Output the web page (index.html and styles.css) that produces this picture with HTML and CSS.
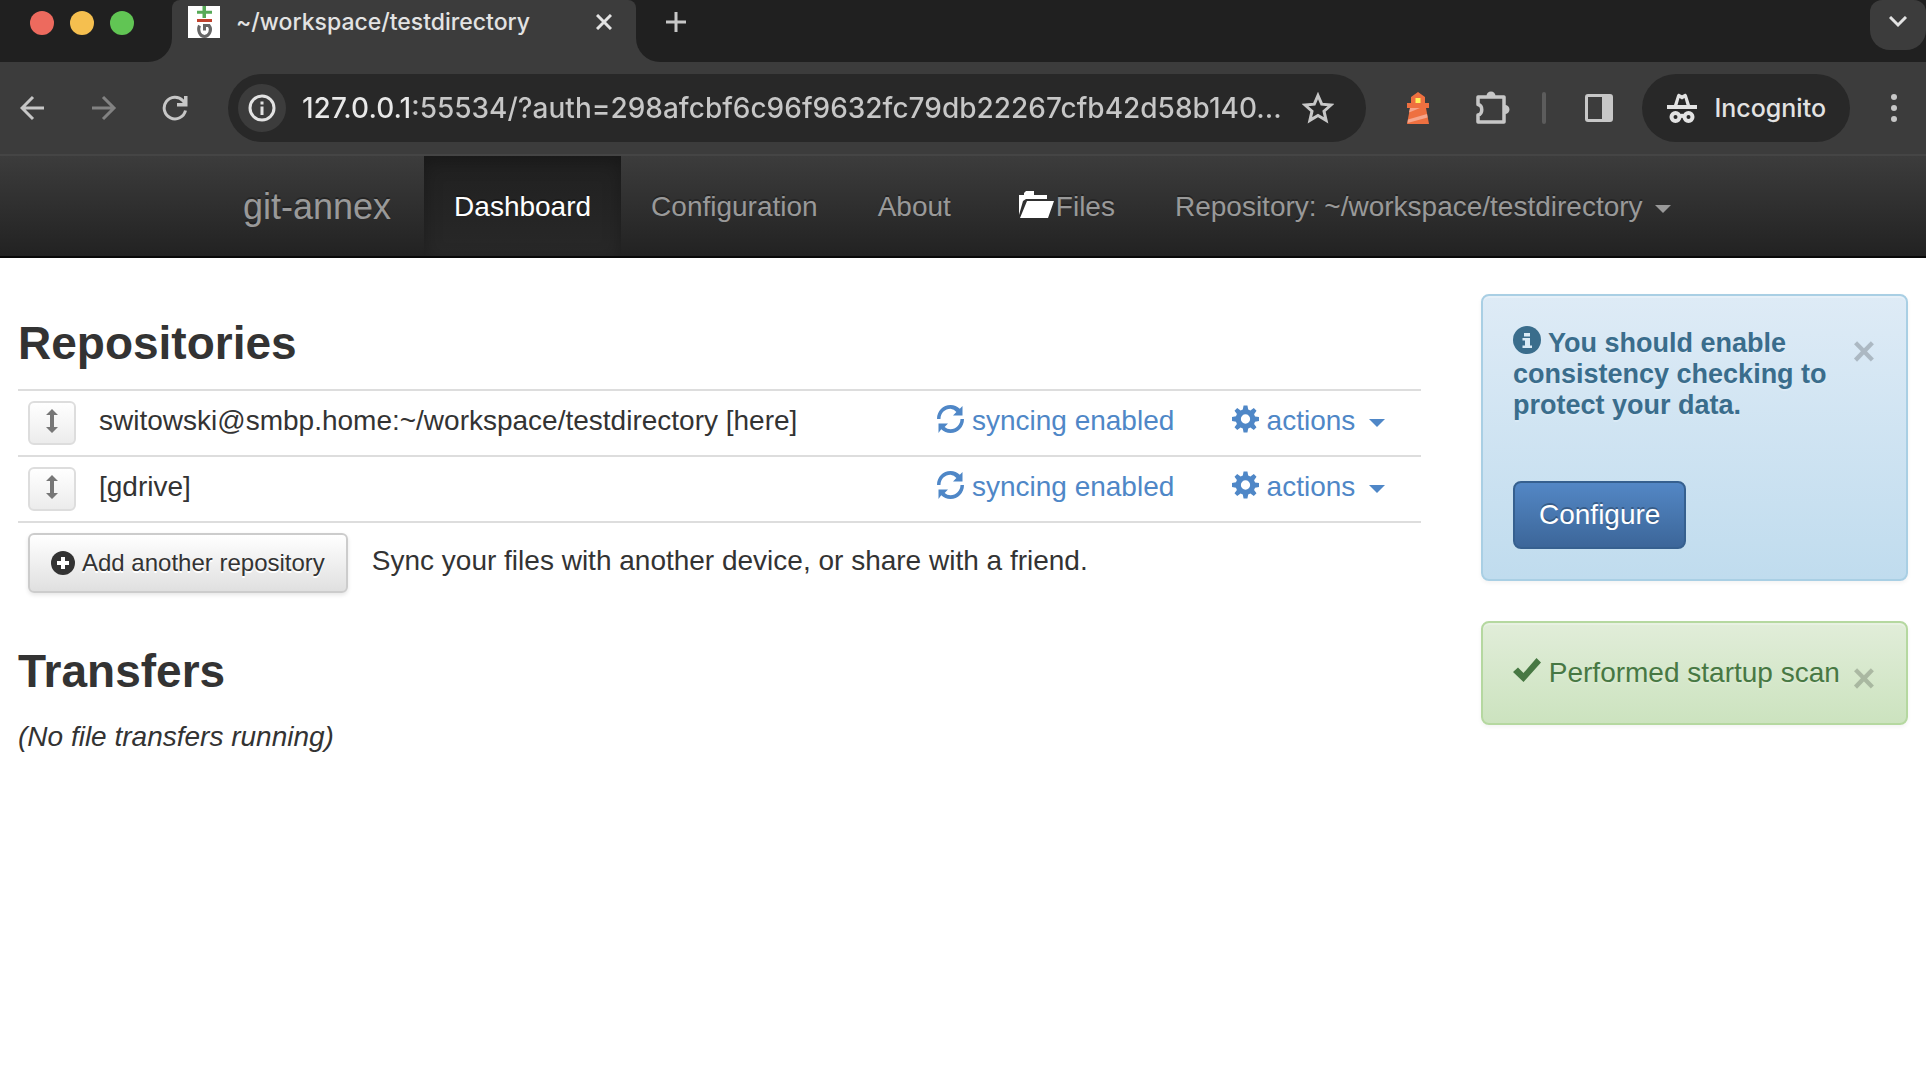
FILE: index.html
```html
<!DOCTYPE html>
<html lang="en">
<head>
<meta charset="utf-8">
<title>~/workspace/testdirectory</title>
<link rel="stylesheet" href="styles.css">
</head>
<body>
<svg class="sprite" aria-hidden="true">
  <symbol id="updown" viewBox="0 0 12 24"><path d="M6 0l6 6H8v12h4l-6 6-6-6h4V6H0z"/></symbol>
  <symbol id="refresh" viewBox="0 0 27 28"><path d="M0 14C0 6 6 0 13.500 0c3.700 0 6.900 1.400 9.300 3.700L25.500 1v9.500H16l3.400-3.400A9.800 9.800 0 0 0 13.500 3.800C8 3.800 3.600 8 3.500 14zM27 14c0 8-6 14-13.500 14-3.700 0-6.900-1.400-9.300-3.700L1.500 28v-9.500H11l-3.400 3.400a9.800 9.800 0 0 0 5.900 2.300c5.500 0 9.900-4.200 10-10.200z"/></symbol>
  <symbol id="gear" viewBox="0 0 28 28"><path fill-rule="evenodd" d="M12 0h4l.8 4.200 2.300 1 3.500-2.500 2.800 2.800-2.500 3.500 1 2.300L28 12v4l-4.100.8-1 2.300 2.500 3.500-2.800 2.800-3.500-2.500-2.300 1L16 28h-4l-.8-4.100-2.300-1-3.500 2.500-2.800-2.800 2.500-3.500-1-2.300L0 16v-4l4.100-.8 1-2.300-2.500-3.500 2.800-2.800 3.500 2.500 2.300-1zM14 9.200a4.800 4.800 0 1 0 0 9.600 4.800 4.800 0 0 0 0-9.600z"/></symbol>
</svg>

<header class="browser">
  <div class="tabstrip">
    <div class="window-controls"><i class="light red"></i><i class="light yellow"></i><i class="light green"></i></div>
    <div class="tab-slot">
      <div class="tab">
        <svg class="favicon" viewBox="0 0 32 32"><path fill="#fff" d="M0 0h32v32H0z"/><path fill="#57a957" d="M14.500 0h3.500v12h-3.500zM9 4.800h15v3H9z"/><path fill="#c0432f" d="M9 13h15v3H9z"/><path fill="none" stroke="#666" stroke-width="3" d="M11.500 19.500c-2.300 5 .5 11 5 11s8-6.500 4.500-11h-4.500v5"/></svg>
        <span class="tab-title">~/workspace/testdirectory</span>
        <button class="chrome-btn" aria-label="Close tab"><svg width="16" height="16" viewBox="0 0 16 16"><path class="line light-line" d="M1 1l14 14M15 1L1 15"/></svg></button>
      </div>
    </div>
    <div class="strip-rest">
      <button class="chrome-btn" aria-label="New tab"><svg width="20" height="20" viewBox="0 0 20 20"><path class="line" d="M10 0v20M0 10h20"/></svg></button>
      <button class="chrome-btn tab-search" aria-label="Search tabs"><svg width="18" height="12" viewBox="0 0 18 12"><path class="line light-line" d="M1 1l8 8 8-8"/></svg></button>
    </div>
  </div>
  <div class="toolbar">
    <div class="history">
      <button class="chrome-btn" aria-label="Back"><svg width="26" height="26" viewBox="0 0 26 26"><path class="line" d="M24 13H2M13 2L2 13l11 11"/></svg></button>
      <button class="chrome-btn faded" aria-label="Forward"><svg width="26" height="26" viewBox="0 0 26 26"><path class="line" d="M1 13h22M12 2l11 11-11 11"/></svg></button>
      <button class="chrome-btn" aria-label="Reload"><svg width="26" height="26" viewBox="0 0 26 26"><path class="line" d="M23.500 15.500A10.800 10.800 0 1 1 21 5.800L23.500 9"/><path fill="#c7c7c7" d="M22 1h3.500v10.500H15V8h7z"/></svg></button>
    </div>
    <div class="omnibox">
      <button class="chrome-btn site-info" aria-label="Site information"><svg width="28" height="28" viewBox="0 0 28 28"><circle class="line light-line" cx="14" cy="14" r="12"/><path fill="#e3e3e3" d="M12.500 12.500h3V21h-3zM12.500 7.500h3v3h-3z"/></svg></button>
      <input class="url" type="text" aria-label="Address" value="127.0.0.1:55534/?auth=298afcbf6c96f9632fc79db22267cfb42d58b140...">
      <button class="chrome-btn" aria-label="Bookmark this page"><svg width="32" height="32" viewBox="0 0 32 32"><path class="line" d="M16 3.500l3.700 8.700 9.300.8-7 6.200 2.100 9.200-8.100-4.900-8.100 4.900L10 19.200 3 13l9.300-.8z"/></svg></button>
    </div>
    <div class="extensions">
      <button class="chrome-btn" aria-label="Lighthouse"><svg width="24" height="32" viewBox="0 0 24 32"><path fill="#ee7040" d="M12 0l7 5v6h4v5h-3l3 16H1l3-16H1v-5h4V5z"/><path fill="#fff25a" d="M9.500 6h5v5h-5z"/><path fill="#f6a58b" d="M4 16h10L3 20.500zM2 27.500L21 22l.6 3.500L1.500 31z"/></svg></button>
      <button class="chrome-btn" aria-label="Extensions"><svg width="36" height="36" viewBox="0 0 36 36"><path fill="none" stroke="#c7c7c7" stroke-width="3.500" stroke-linejoin="round" d="M4 7h26v25H4v-7c5-1 5-9.500 0-10.500z"/><path fill="#c7c7c7" d="M12.500 6a4.500 4.500 0 0 1 9 0zM31 15a4.500 4.500 0 0 1 0 9z"/></svg></button>
      <i class="separator"></i>
      <button class="chrome-btn" aria-label="Side panel"><svg width="30" height="30" viewBox="0 0 30 30"><path fill="#c7c7c7" fill-rule="evenodd" d="M4 1h22a3 3 0 0 1 3 3v22a3 3 0 0 1-3 3H4a3 3 0 0 1-3-3V4a3 3 0 0 1 3-3zm0 3v22h14V4z"/></svg></button>
    </div>
    <button class="incognito"><svg width="32" height="32" viewBox="0 0 32 32"><path fill="#e3e3e3" fill-rule="evenodd" d="M1 13h7L11 3.500C11.500 2 12.500 1.500 13.500 2l2.500 1.200L18.500 2c1-.5 2 0 2.500 1.500L24 13h7v4H1zm10.500 0h9L18.500 6 16 7.500 13.500 6z"/><g fill="none" stroke="#e3e3e3" stroke-width="4"><circle cx="9.500" cy="25" r="4"/><circle cx="22.500" cy="25" r="4"/><path d="M13 24.500q3-1.500 6 0"/></g></svg>Incognito</button>
    <button class="chrome-btn" aria-label="Menu"><svg width="8" height="28" viewBox="0 0 8 28" fill="#c7c7c7"><circle cx="4" cy="3" r="3"/><circle cx="4" cy="14" r="3"/><circle cx="4" cy="25" r="3"/></svg></button>
  </div>
</header>

<nav class="navbar">
  <a class="brand" href="#">git-annex</a>
  <a class="nav-link active" href="#">Dashboard</a>
  <a class="nav-link" href="#">Configuration</a>
  <a class="nav-link" href="#">About</a>
  <a class="nav-link" href="#"><svg class="folder" width="36" height="28" viewBox="0 0 36 28"><path fill="#fff" d="M0 24V4h5V2l2-2h8v4h13v4H7L4 10zM8 10h27l-6 17H1z"/></svg>Files</a>
  <a class="nav-link" href="#">Repository: ~/workspace/testdirectory <i class="caret"></i></a>
</nav>

<div class="content">
  <main>
    <h2>Repositories</h2>
    <table class="repos">
      <tbody>
        <tr>
          <td class="name"><button class="drag" aria-label="Reorder"><svg width="12" height="24"><use href="#updown"/></svg></button>switowski@smbp.home:~/workspace/testdirectory [here]</td>
          <td class="sync"><a href="#"><svg width="27" height="28"><use href="#refresh"/></svg>syncing enabled</a></td>
          <td class="actions"><a href="#"><svg width="27" height="28"><use href="#gear"/></svg>actions <i class="caret"></i></a></td>
        </tr>
        <tr>
          <td class="name"><button class="drag" aria-label="Reorder"><svg width="12" height="24"><use href="#updown"/></svg></button>[gdrive]</td>
          <td class="sync"><a href="#"><svg width="27" height="28"><use href="#refresh"/></svg>syncing enabled</a></td>
          <td class="actions"><a href="#"><svg width="27" height="28"><use href="#gear"/></svg>actions <i class="caret"></i></a></td>
        </tr>
        <tr>
          <td class="add" colspan="3"><div class="add-row"><button class="add-btn"><svg width="24" height="24" viewBox="0 0 24 24"><circle cx="12" cy="12" r="12" fill="#333"/><path fill="#fff" d="M10 6h4v4h4v4h-4v4h-4v-4H6v-4h4z"/></svg>Add another repository</button><span>Sync your files with another device, or share with a friend.</span></div></td>
        </tr>
      </tbody>
    </table>
    <h2>Transfers</h2>
    <p class="empty">(No file transfers running)</p>
  </main>
  <aside>
    <div class="alert info">
      <button class="close" aria-label="Dismiss">×</button>
      <h4><svg width="28" height="28" viewBox="0 0 28 28"><circle cx="14" cy="14" r="14" fill="#3a6d8c"/><path fill="#d9eaf5" d="M11 7h6v3.500h-6zM9.500 12H17v7.500h2V22H9.500v-2.500H12v-5H9.500z"/></svg> You should enable consistency checking to protect your data.</h4>
      <button class="primary">Configure</button>
    </div>
    <div class="alert success">
      <button class="close" aria-label="Dismiss">×</button>
      <p><svg width="28" height="24" viewBox="0 0 28 24"><path fill="#477843" d="M0 14l5-4.500 5.500 5.500L23.500 0 28 4.500 10.500 24z"/></svg> Performed startup scan</p>
    </div>
  </aside>
</div>
</body>
</html>
```

FILE: styles.css
```css
* { box-sizing: border-box; }
body {
  margin: 0;
  background: #fff;
  color: #333;
  font: 28px/40px "Liberation Sans", Arial, sans-serif;
}
button { font: inherit; cursor: pointer; }
a { text-decoration: none; }
svg { flex: none; }
.sprite { display: none; }

/* Browser window */
.browser { background: #3c3c3c; font-family: Inter, sans-serif; font-weight: 500; border-bottom: 2px solid #454545; }
.line { fill: none; stroke: #c7c7c7; stroke-width: 3; }
.light-line { stroke: #e3e3e3; }
.chrome-btn { display: flex; align-items: center; justify-content: center; padding: 0; border: 0; background: none; }
.faded { opacity: .5; }
.tabstrip { display: flex; height: 62px; }
.window-controls {
  display: flex; gap: 16px; width: 172px; padding: 11px 0 0 30px;
  background: #202020; border-bottom-right-radius: 24px;
}
.light { width: 24px; height: 24px; border-radius: 50%; }
.red { background: #ed6a5e; }
.yellow { background: #f5bf4f; }
.green { background: #61c554; }
.tab-slot { width: 464px; background: #202020; }
.tab {
  display: flex; align-items: center; height: 100%; padding: 0 24px 18px 16px;
  background: #3c3c3c; border-radius: 8px 8px 0 0;
}
.favicon { width: 32px; height: 32px; }
.tab-title { flex: 1; padding-left: 16px; color: #e3e3e3; font-size: 23px; line-height: 32px; }
.strip-rest {
  display: flex; flex: 1; align-items: flex-start; justify-content: space-between; padding-left: 30px;
  background: #202020; border-bottom-left-radius: 24px;
}
.strip-rest .chrome-btn { height: 44px; }
.strip-rest .tab-search { width: 56px; height: 50px; padding-bottom: 6px; background: #3c3c3c; border-radius: 12px 12px 20px 20px; }
.toolbar { display: flex; align-items: center; height: 92px; padding: 0 28px 0 20px; }
.history { display: flex; gap: 45px; width: 208px; }
.omnibox {
  display: flex; flex: 1; align-items: center; height: 68px; padding: 0 32px 0 10px;
  background: #282828; border-radius: 34px;
}
.site-info { width: 48px; height: 48px; background: #3c3c3c; border-radius: 50%; }
.url {
  flex: 1; min-width: 0; margin: 0 16px; padding: 0; border: 0; outline: 0;
  font: 500 28px/40px Inter, sans-serif; color: transparent;
  background: linear-gradient(90deg, #e8e8e8 112px, #c7c7c7 112px);
  -webkit-background-clip: text; background-clip: text;
}
.extensions { display: flex; align-items: center; margin: 0 28px 0 40px; }
.extensions .chrome-btn:nth-child(2) { margin: 0 32px 0 44px; }
.separator { width: 4px; height: 32px; margin-right: 38px; background: #5c5c5c; border-radius: 2px; }
.incognito {
  display: flex; align-items: center; gap: 16px; height: 68px; margin-right: 40px; padding: 0 24px;
  border: 0; border-radius: 34px; background: #282828; color: #e3e3e3; font-size: 25px;
}

/* Application navigation */
.navbar {
  display: flex; height: 102px; padding-left: 213px;
  background: linear-gradient(#3c3c3c, #222); border-bottom: 2px solid #080808;
}
.brand, .nav-link { display: flex; align-items: center; padding: 2px 30px 0; color: #999; text-shadow: 0 -2px 0 rgba(0, 0, 0, .25); }
.brand { padding-right: 33px; font-size: 36px; }
.folder { margin: 0 1px 4px 8px; }
.nav-link.active { color: #fff; background: linear-gradient(#202020, #282828); box-shadow: inset 0 6px 18px rgba(0, 0, 0, .25); }
.caret { display: inline-block; border: 8px solid transparent; border-top-color: currentColor; border-bottom: 0; }
.navbar .caret { margin: 4px 0 0 12px; }

/* Dashboard */
.content { display: grid; grid-template-columns: 23fr 7fr; gap: 60px; padding: 36px 18px; }
h2 { margin: 23px 0 20px; font-size: 46px; line-height: 52px; }
.repos { width: 100%; border-collapse: collapse; table-layout: fixed; }
td { padding: 0 7px; border-top: 2px solid #ddd; vertical-align: middle; }
.name { width: 65%; height: 66px; padding-left: 10px; }
.sync { width: 21%; }
.drag {
  display: inline-flex; align-items: center; justify-content: center; width: 48px; height: 44px;
  margin-right: 23px; padding: 0 0 4px; vertical-align: middle;
  border: 2px solid #ddd; border-radius: 6px; background: linear-gradient(#fff, #ececec); fill: #777;
}
.repos a { display: flex; align-items: center; padding-bottom: 4px; color: #4f87c7; fill: #4f87c7; }
.repos a svg { margin: 0 8px 4px 0; }
.repos .caret { margin: 4px 0 0 14px; }
.add { padding: 10px 10px 0; }
.add-row { display: flex; gap: 24px; line-height: 56px; }
.add-btn {
  display: flex; align-items: center; gap: 7px; height: 60px; padding: 0 21px;
  border: 2px solid #ccc; border-radius: 6px; background: linear-gradient(#fff, #e0e0e0);
  box-shadow: 0 2px 4px rgba(0, 0, 0, .1); color: #333; font-size: 24px; text-shadow: 0 2px 0 #fff;
}
.repos + h2 { margin-top: 52px; }
.empty { margin: 0; font-style: italic; }
.alert { padding: 30px; border: 2px solid; border-radius: 8px; box-shadow: inset 0 2px 0 rgba(255, 255, 255, .25), 0 2px 4px rgba(0, 0, 0, .05); text-shadow: 0 2px 0 rgba(255, 255, 255, .2); }
.info { margin-bottom: 40px; border-color: #a9cfe4; background: linear-gradient(#deebf6, #c0dcee); color: #3a6d8c; }
.success { border-color: #b5d8a0; background: linear-gradient(#e1edd9, #cce3bf); color: #477843; }
.alert h4 { margin: 0 0 60px; font-size: 27px; line-height: 31px; }
.alert h4 svg { vertical-align: -2px; }
.alert p { margin: 0; white-space: nowrap; }
.close {
  float: right; width: 24px; padding: 0; border: 0; background: none;
  color: #000; opacity: .2; font-size: 40px; font-weight: bold; line-height: 50px;
}
.primary {
  display: block; height: 68px; padding: 0 24px; border: 2px solid #36608f; border-radius: 8px;
  background: linear-gradient(#5387c5, #3c6699); color: #fff; text-shadow: 0 -2px 0 rgba(0, 0, 0, .25);
}
```
